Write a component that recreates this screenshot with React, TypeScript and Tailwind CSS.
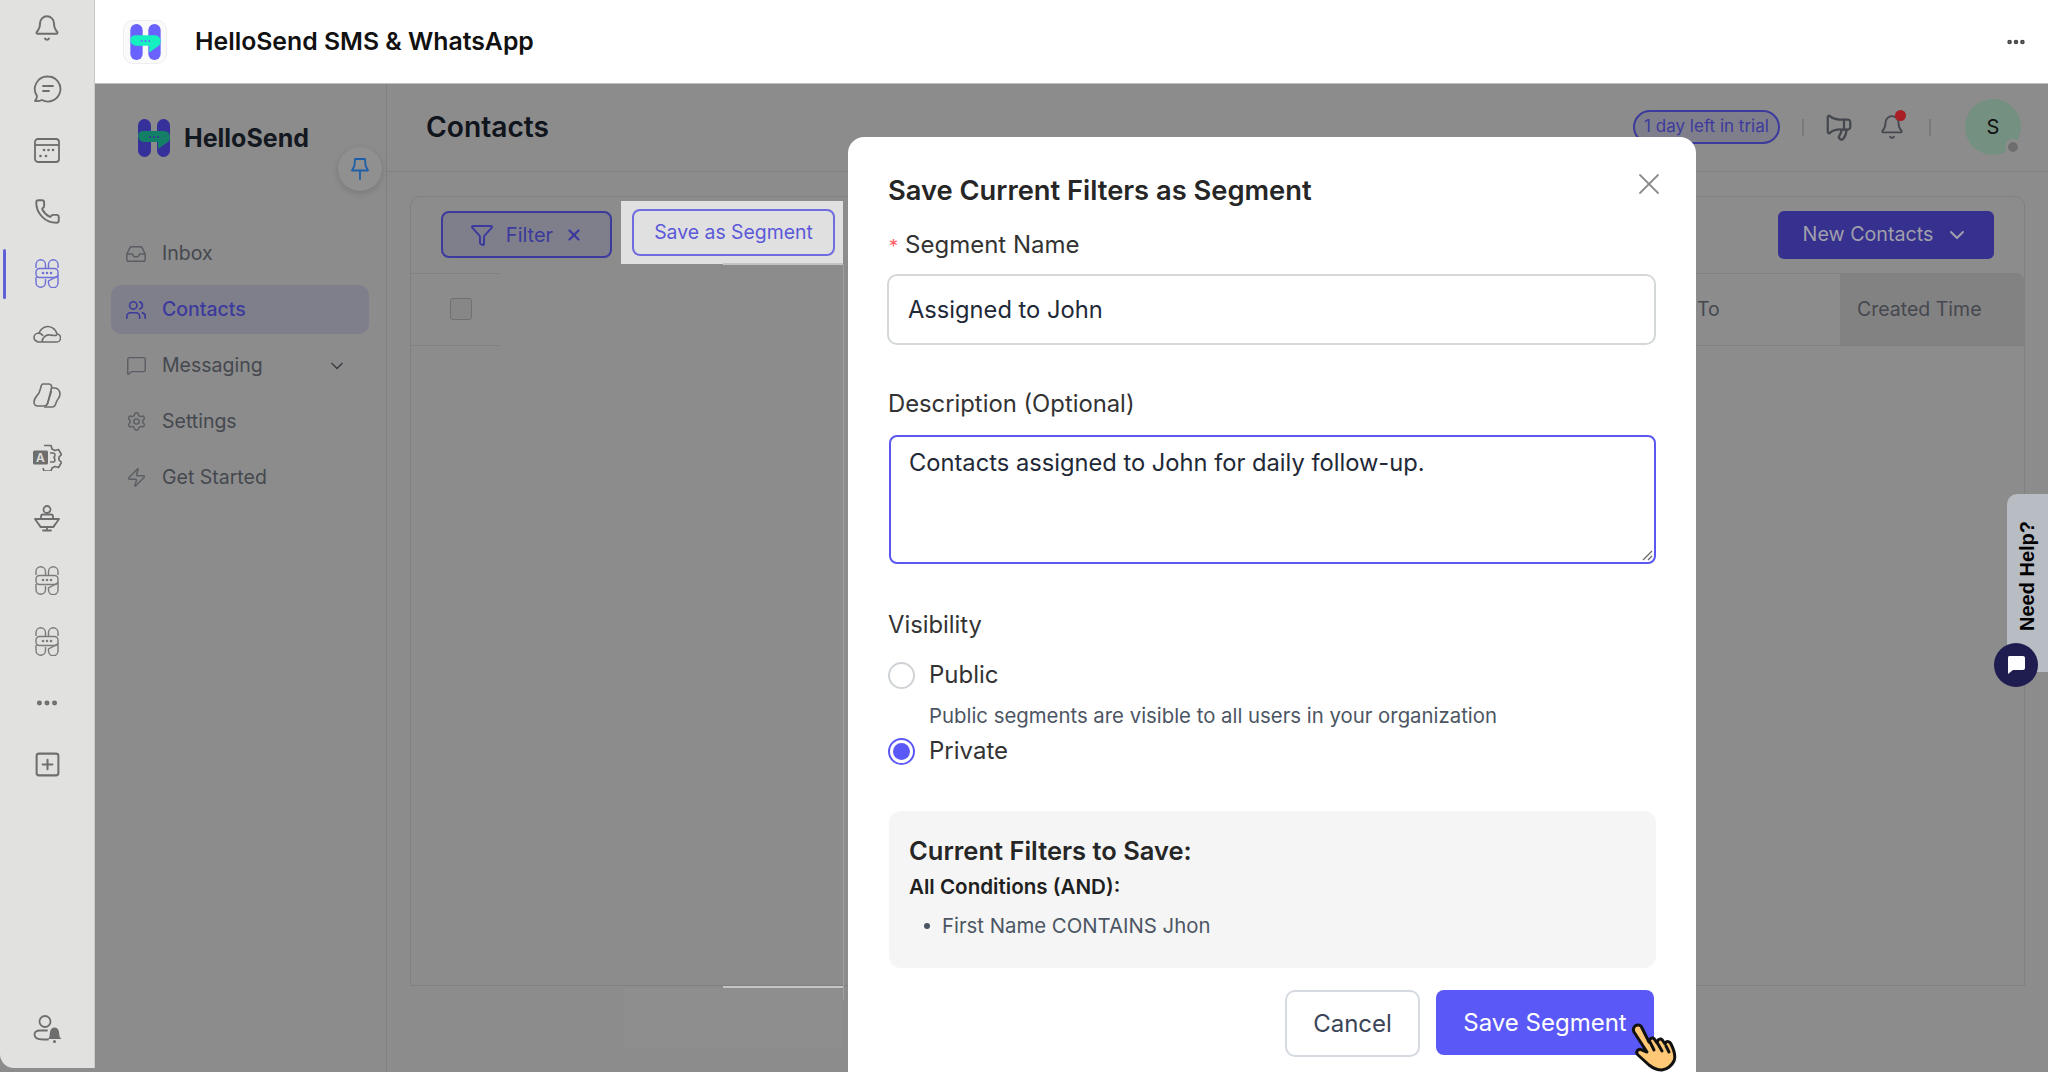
import React from "react";
import { Bell, Phone, Inbox, Users, MessageSquare, Settings, Zap, ChevronDown, Filter, X, Megaphone, MoreHorizontal, SquarePlus } from "lucide-react";

function HOutline({ color = "#7b7b7b" }: { color?: string }) {
  return (
    <svg width="24" height="29" viewBox="0 0 24 29" fill="none" stroke={color} strokeWidth="1.4">
      <path d="M1 9V5.500a4.500 4.500 0 0 1 9.500 0V9" />
      <path d="M13.500 9V5.500a4.500 4.500 0 0 1 9.500 0V9" />
      <path d="M1 18v5.500a4.500 4.500 0 0 0 9.500 0V20" />
      <path d="M13.500 24a4.500 4.500 0 0 0 9.500 0V17l-9.500 5z" />
      <rect x="1" y="9.500" width="22" height="9" rx="3.500" />
      <circle cx="8" cy="14" r=".6" fill={color} />
      <circle cx="12" cy="14" r=".6" fill={color} />
      <circle cx="16" cy="14" r=".6" fill={color} />
    </svg>
  );
}

function HLogo({ left, chat, dot, w, h }: { left: string; chat: string; dot: string; w: number; h: number }) {
  return (
    <svg width={w} height={h} viewBox="0 0 32 38">
      <rect x="0" y="0" width="13" height="38" rx="6.500" fill={left} />
      <rect x="19" y="0" width="13" height="38" rx="6.500" fill={left} />
      <path d="M6 12h20a6 6 0 0 1 6 6v1a6 6 0 0 1-2 4l-10 7v-7H6a6 6 0 0 1-6-6v0a5 5 0 0 1 6-5z" fill={chat} />
      <circle cx="12" cy="18" r="1" fill={dot} />
      <circle cx="16" cy="18" r="1" fill={dot} />
      <circle cx="20" cy="18" r="1" fill={dot} />
    </svg>
  );
}

const stroke = "#6e6e6e";

function RailChat() {
  return (
    <svg width="29" height="28" viewBox="0 0 29 28" fill="none" stroke={stroke} strokeWidth="1.800" strokeLinecap="round" strokeLinejoin="round">
      <path d="M15 1.500a12.500 12.500 0 1 1-6 23.500c-2 1-4.500 1.300-7 1 1.300-1.300 2-3 2-5A12.500 12.500 0 0 1 15 1.500z" />
      <path d="M10 11h10M10 16h6" />
    </svg>
  );
}
function RailCalendar() {
  return (
    <svg width="26" height="25" viewBox="0 0 26 25" fill="none" stroke={stroke} strokeWidth="1.800">
      <rect x="1" y="1" width="24" height="23" rx="3" />
      <path d="M1 7h24" />
      <g fill={stroke} stroke="none">
        <circle cx="10" cy="12" r="1.300" /><circle cx="14.500" cy="12" r="1.300" /><circle cx="19" cy="12" r="1.300" />
        <circle cx="6.500" cy="18" r="1.300" /><circle cx="12" cy="18" r="1.300" />
      </g>
    </svg>
  );
}
function RailCloud() {
  return (
    <svg className="-mt-[3px]" width="28" height="20" viewBox="0 0 28 20" fill="none" stroke={stroke} strokeWidth="1.600" strokeLinejoin="round">
      <path d="M6 19h17a4 4 0 0 0 1-8c-1-5-7-9-12-7-3 1-5 4-6 6-3 0-5 2-5 4.500S3.500 19 6 19z" />
      <path d="M9 19c0-4 4-8 8-7 3 .5 5 1 7 0M5 10c2 0 4 1 5 3" />
    </svg>
  );
}
function RailCopilot() {
  return (
    <svg className="-mt-[1px]" width="28" height="25" viewBox="0 0 28 25" fill="none" stroke={stroke} strokeWidth="1.600" strokeLinejoin="round">
      <path d="M10 1h6c2 0 3 2 2.500 4L15 19c-.5 2.500-2 4-4 4H5c-3 0-4-2-4-4 0-4 3-6 5-9l2-6c.3-2 1-3 2-3z" />
      <path d="M18 5h4c3 0 5 3 5 6 0 4-3 5-4 9-.5 2-2 4-4 4h-8" />
      <path d="M18.500 8 14 22" />
    </svg>
  );
}
function RailAI() {
  return (
    <svg width="29" height="27" viewBox="0 0 29 27" fill="none">
      <path d="M11 1.500h7l1 3.500 3 1.500 3.500-1 3 5-2.500 2.500v3l2.500 2.500-3 5-3.500-1-3 1.500-1 3h-7l-1-3" stroke={stroke} strokeWidth="1.700" strokeLinejoin="round" />
      <rect x="0" y="6.500" width="15" height="14" rx="1.500" fill="#6e6e6e" />
      <text x="3" y="18" fontSize="12" fontWeight="600" fill="#e1e1df" fontFamily="Inter">A</text>
      <path d="M17 9h3c2.500 0 2.500 4 .5 4.500 2 .5 2 4.500-.5 4.500h-3" stroke={stroke} strokeWidth="1.600" />
    </svg>
  );
}
function RailPerson() {
  return (
    <svg width="26" height="27" viewBox="0 0 26 27" fill="none" stroke={stroke} strokeWidth="1.800" strokeLinecap="round" strokeLinejoin="round">
      <circle cx="13" cy="4.500" r="3.500" />
      <path d="M7 14v-2.500c0-1 1-2 2-2h8c1 0 2 1 2 2V14" />
      <path d="M1 14h24l-3.500 5c-1 1-1.500 2-2 3H6.500c-.5-1-1-2-2-3z" />
      <path d="M13 22v3M9 25.500h8" />
    </svg>
  );
}
function RailUserBell() {
  return (
    <svg width="31" height="29" viewBox="0 0 31 29" fill="none">
      <circle cx="12" cy="6.500" r="5.500" stroke={stroke} strokeWidth="1.800" />
      <path d="M14 15.500H7c-4 0-5.500 2-5.500 4 0 3 2.500 5 8.500 5h5" stroke={stroke} strokeWidth="1.800" strokeLinecap="round" />
      <path d="M15 24c2-2 1.500-3.500 2-7 .5-3 2-4.500 4.500-4.500S25.500 14 26 17c.5 3.500 0 5 2.500 7z" fill="#6e6e6e" />
      <circle cx="21.500" cy="26.500" r="1.500" fill="#6e6e6e" />
    </svg>
  );
}
function PinIcon() {
  return (
    <svg width="18" height="22" viewBox="0 0 18 22" fill="none" stroke="#1f5fa8" strokeWidth="1.800" strokeLinejoin="round" strokeLinecap="round">
      <path d="M4 1h10l.5 6.500L17 12.500H1l2.500-5z" />
      <path d="M9 12.500V21" />
    </svg>
  );
}
function Hand() {
  return (
    <svg width="50" height="50" viewBox="0 0 50 50" fill="#ffc876" stroke="#111" strokeWidth="3" strokeLinejoin="round" strokeLinecap="round">
      <path d="M4 4c3-2 6-1 7 2l7 14 1-3c2-2 4-1 5 1l2 3 1-3c2-2 4-1 5 1l2 3 1-2c2-1 4 0 5 2 3 6 5 12 3 17-2 4-6 8-12 9-4 0-8-1-13-5L7 33c-3-3 0-7 4-5l5 2L3 10C2 8 2 6 4 4z" />
      <path d="M19 20l4 8M27 22l4 7M35 24l3 6" fill="none" />
    </svg>
  );
}

const railIcons = [
  <Bell size={28} color={stroke} strokeWidth={1.7} />,
  <RailChat />,
  <RailCalendar />,
  <Phone size={27} color={stroke} strokeWidth={1.7} />,
  <HOutline color="#6f6fd8" />,
  <RailCloud />,
  <RailCopilot />,
  <RailAI />,
  <RailPerson />,
  <HOutline />,
  <HOutline />,
  <MoreHorizontal size={26} color={stroke} strokeWidth={2.6} />,
  <SquarePlus size={29} color={stroke} strokeWidth={1.7} />,
];

const navIcon = "#5a5d63";
const nav = [
  { label: "Inbox", icon: <Inbox size={22} color={navIcon} strokeWidth={1.6} /> },
  { label: "Contacts", icon: <Users size={22} color="#3c3a9c" strokeWidth={1.8} />, active: true },
  { label: "Messaging", icon: <MessageSquare size={21} color={navIcon} strokeWidth={1.6} />, chevron: true },
  { label: "Settings", icon: <Settings size={21} color={navIcon} strokeWidth={1.6} /> },
  { label: "Get Started", icon: <Zap size={21} color={navIcon} strokeWidth={1.6} /> },
];

export default function App() {
  return (
    <div className="relative flex h-[1072px] w-[2048px] overflow-hidden bg-[#8c8c8c] font-['Inter',sans-serif]">
      {/* icon rail */}
      <aside className="flex h-[1068px] w-[95px] shrink-0 flex-col rounded-bl-[14px] border-r border-[#c9c9c9] bg-[#e1e1df] pb-[24px]">
        <div className="-mt-[3px] flex flex-col">
          {railIcons.map((ic, i) => (
            <div key={i} className="relative flex h-[61.4px] items-center justify-center">
              {i === 4 && <span className="absolute left-[3px] top-[6px] h-[50px] w-[3px] rounded bg-[#6060d8]" />}
              {ic}
            </div>
          ))}
        </div>
        <div className="mt-auto flex justify-center pl-[2px]">
          <RailUserBell />
        </div>
      </aside>

      <div className="flex min-w-0 flex-1 flex-col">
        {/* top app bar */}
        <header className="flex h-[84px] shrink-0 items-center border-b border-[#bdbdbd] bg-white pl-[28px] pr-[21px]">
          <div className="flex h-[44px] w-[44px] items-center justify-center rounded-[10px] border border-[#eeeeee] bg-[#fafafa]">
            <HLogo left="#6a62ff" chat="#14f0c0" dot="#6a62ff" w={31} h={36} />
          </div>
          <h1 className="ml-[28px] text-[24.800px] font-semibold leading-none text-[#111]">HelloSend SMS &amp; WhatsApp</h1>
          <MoreHorizontal className="ml-auto" size={22} color="#444" strokeWidth={3} />
        </header>

        <div className="flex min-h-0 flex-1">
          {/* sidebar */}
          <aside className="relative w-[292px] shrink-0 border-r border-[#808080]">
            <div className="flex items-center pl-[43px] pt-[34px]">
              <HLogo left="#36309a" chat="#137f66" dot="#36309a" w={32} h={40} />
              <span className="ml-[14px] text-[25px] font-bold leading-none text-[#141820]">HelloSend</span>
            </div>
            <div className="absolute right-[4px] top-[63px] flex h-[44px] w-[44px] items-center justify-center rounded-full bg-[#909090] shadow-[0_2px_6px_rgba(0,0,0,0.15)]">
              <PinIcon />
            </div>
            <nav className="mt-[71px] flex flex-col gap-[7px] pl-[16px] pr-[17px]">
              {nav.map((n) => (
                <div key={n.label} className={`flex h-[49px] items-center rounded-[10px] pl-[14px] pr-[22px] ${n.active ? "bg-[#7f7f8c]" : ""}`}>
                  <span className="flex w-[22px] justify-center">{n.icon}</span>
                  <span className={`ml-[15px] text-[19.500px] ${n.active ? "font-medium text-[#3c3a9c]" : "text-[#45484f]"}`}>{n.label}</span>
                  {n.chevron && <ChevronDown className="ml-auto" size={20} color="#3f4248" strokeWidth={2} />}
                </div>
              ))}
            </nav>
          </aside>

          {/* main */}
          <main className="min-w-0 flex-1">
            <div className="flex h-[88px] items-center border-b border-[#808080] pl-[39px] pr-[27px]">
              <h2 className="-mt-[1px] text-[28.200px] font-semibold leading-none text-[#10141c]">Contacts</h2>
              <div className="ml-auto flex -mt-[1px] items-center">
                <span className="flex h-[34px] w-[147px] items-center justify-center rounded-full border-2 border-[#3c3a9c] bg-[#7f7f8c] text-[17px] text-[#3c3a9c]">1 day left in trial</span>
                <span className="ml-[22px] h-[17px] w-[2px] bg-[#7a7a7a]" />
                <Megaphone className="ml-[20px] -scale-x-100" size={30} color="#45484f" strokeWidth={1.8} />
                <span className="relative ml-[25px]">
                  <Bell size={26} color="#45484f" strokeWidth={1.7} />
                  <span className="absolute -right-[1px] -top-[4px] h-[11px] w-[11px] rounded-full bg-[#a81f25]" />
                </span>
                <span className="ml-[24px] h-[17px] w-[2px] bg-[#7a7a7a]" />
                <span className="relative ml-[34px] flex h-[56px] w-[56px] items-center justify-center rounded-full bg-[#739080] text-[20px] text-[#111]">
                  S
                  <span className="absolute bottom-0 right-0 h-[16px] w-[16px] rounded-full border-[3px] border-[#8d8d8d] bg-[#6e6e6e]" />
                </span>
              </div>
            </div>

            <section className="ml-[23px] mr-[23px] mt-[24px] h-[790px] rounded-t-[10px] border border-[#808080]">
              <div className="flex h-[76px] items-center pl-[30px] pr-[30px]">
                <button className="-mt-[1px] flex h-[47px] w-[171px] items-center justify-center gap-[12px] rounded-[8px] border-2 border-[#3c3a9c] bg-[#7f7f8c] text-[20px] text-[#3c3a9c]">
                  <Filter size={24} color="#3c3a9c" strokeWidth={2} />
                  Filter
                  <X size={18} color="#3c3a9c" strokeWidth={3} />
                </button>
                <button className="-mt-[1px] ml-auto flex h-[48px] w-[216px] items-center justify-center gap-[12px] rounded-[6px] bg-[#36308f] text-[19.700px] text-[#a0a0aa]">
                  New Contacts
                  <ChevronDown size={24} color="#a0a0aa" strokeWidth={2} />
                </button>
              </div>
              <div className="flex h-[73px] items-stretch">
                <div className="flex w-[89px] items-center border-y border-[#808080] pl-[39px]">
                  <span className="-mt-[1px] h-[22px] w-[22px] rounded-[3px] border border-[#707070] bg-[#878787]" />
                </div>
                <div className="ml-auto flex w-[148px] items-center border-y border-[#808080] pl-[5px] text-[19.500px] text-[#45484f]">To</div>
                <div className="flex w-[184px] items-center rounded-tr-[8px] border-y border-[#808080] bg-[#828282] pl-[17px] text-[19.500px] text-[#45484f]">Created Time</div>
              </div>
            </section>
          </main>
        </div>
      </div>

      {/* highlighted tour target */}
      <div className="absolute left-[621px] top-[201px] flex h-[63px] w-[222px] items-start bg-[#e0e0e0] pl-[11px] pt-[8px]">
        <button className="flex h-[47px] w-[203px] items-center justify-center rounded-[8px] border-2 border-[#706ce0] text-[19.400px] text-[#5b58d8]">Save as Segment</button>
      </div>
      <div className="absolute left-[723px] top-[263px] h-[2px] w-[120px] bg-[#c4c4c4]" />
      <div className="absolute left-[843px] top-[264px] h-[736px] w-[1px] bg-[#a0a0a0]" />
      <div className="absolute left-[723px] top-[986px] h-[2px] w-[120px] bg-[#c4c4c4]" />
      <div className="absolute left-[624px] top-[988px] h-[61px] w-[219px] bg-[#8e8e8e]" />

      {/* modal */}
      <div className="absolute left-[848px] top-[137px] h-[935px] w-[848px] rounded-t-[16px] bg-white pl-[41px] pr-[40px] pt-[37px]">
        <X className="absolute right-[29px] top-[29px]" size={36} color="#8c8c8c" strokeWidth={1.2} />
        <h3 className="-ml-[1px] text-[27.300px] font-semibold leading-[34px] text-[#262626]">Save Current Filters as Segment</h3>
        <label className="mt-[21px] block text-[24px] leading-[32px] text-[#333]"><span className="mr-[7px] text-[18px] text-[#ff5a5f]">*</span>Segment Name</label>
        <div className="-ml-[2px] mt-[11px] flex h-[71px] items-center rounded-[10px] border-2 border-[#d5d8d8] pl-[19px] text-[23.700px] text-[#1f2937]">Assigned to John</div>
        <label className="-ml-[1px] mt-[43px] block text-[23.800px] leading-[32px] text-[#333]">Description (Optional)</label>
        <div className="relative mt-[15px] h-[129px] rounded-[8px] border-2 border-[#5b58f0] pl-[18px] pt-[9px] text-[23.700px] leading-[34px] text-[#1f2937]">
          Contacts assigned to John for daily follow-up.
          <svg className="absolute bottom-[1px] right-[1px]" width="12" height="12" viewBox="0 0 12 12" stroke="#666" strokeWidth="1.200"><path d="M2 11 11 2M7 11l4-4" /></svg>
        </div>
        <label className="-ml-[1px] mt-[45px] block text-[23.800px] leading-[32px] text-[#333]">Visibility</label>
        <div className="mt-[18px] flex h-[32px] items-center text-[24px] text-[#333]">
          <span className="-ml-[1px] h-[27px] w-[27px] rounded-full border-2 border-[#d0d3d6]" />
          <span className="ml-[14px]">Public</span>
        </div>
        <p className="ml-[40px] mt-[12px] text-[20.350px] leading-[26px] text-[#4b5563]">Public segments are visible to all users in your organization</p>
        <div className="mt-[6px] flex h-[32px] items-center text-[24px] text-[#333]">
          <span className="-ml-[1px] flex h-[27px] w-[27px] items-center justify-center rounded-full border-2 border-[#5b58f8]">
            <span className="h-[17px] w-[17px] rounded-full bg-[#5b58f8]" />
          </span>
          <span className="ml-[14px]">Private</span>
        </div>
        <div className="mt-[44px] h-[157px] rounded-[12px] bg-[#f5f5f5] pl-[20px] pt-[24px]">
          <div className="text-[25.500px] font-semibold leading-[32px] text-[#262626]">Current Filters to Save:</div>
          <div className="mt-[7px] text-[20.600px] font-semibold leading-[26px] text-[#1f1f1f]">All Conditions (AND):</div>
          <div className="mt-[13px] flex items-center pl-[15px] text-[20.350px] leading-[26px] text-[#4b5563]">
            <span className="h-[6px] w-[6px] rounded-full bg-[#4b5563]" />
            <span className="ml-[12px]">First Name CONTAINS Jhon</span>
          </div>
        </div>
        <div className="mt-[22px] flex justify-end gap-[16px] pr-[2px]">
          <button className="h-[67px] w-[135px] rounded-[10px] border-2 border-[#d5d9e0] bg-white text-[24px] text-[#3b4557]">Cancel</button>
          <button className="h-[65px] w-[218px] rounded-[8px] bg-[#5b58f8] text-[24px] text-white">Save Segment</button>
        </div>
      </div>
      <div className="absolute left-[1631px] top-[1022px]"><Hand /></div>

      {/* help tab */}
      <div className="absolute right-0 top-[494px] flex h-[178px] w-[41px] items-center justify-center rounded-tl-[10px] bg-[#b8bcc3]">
        <span className="-mt-[14px] -rotate-90 whitespace-nowrap font-['Liberation_Sans',sans-serif] text-[20px] font-bold text-black">Need Help?</span>
      </div>
      <div className="absolute left-[1994px] top-[643px] flex h-[44px] w-[44px] items-center justify-center rounded-full bg-[#1f1c4f]">
        <svg width="20" height="20" viewBox="0 0 20 20" fill="white"><path d="M3 1h14a2 2 0 0 1 2 2v10a2 2 0 0 1-2 2H7l-5 4V3a2 2 0 0 1 1-2z" /></svg>
      </div>
    </div>
  );
}
